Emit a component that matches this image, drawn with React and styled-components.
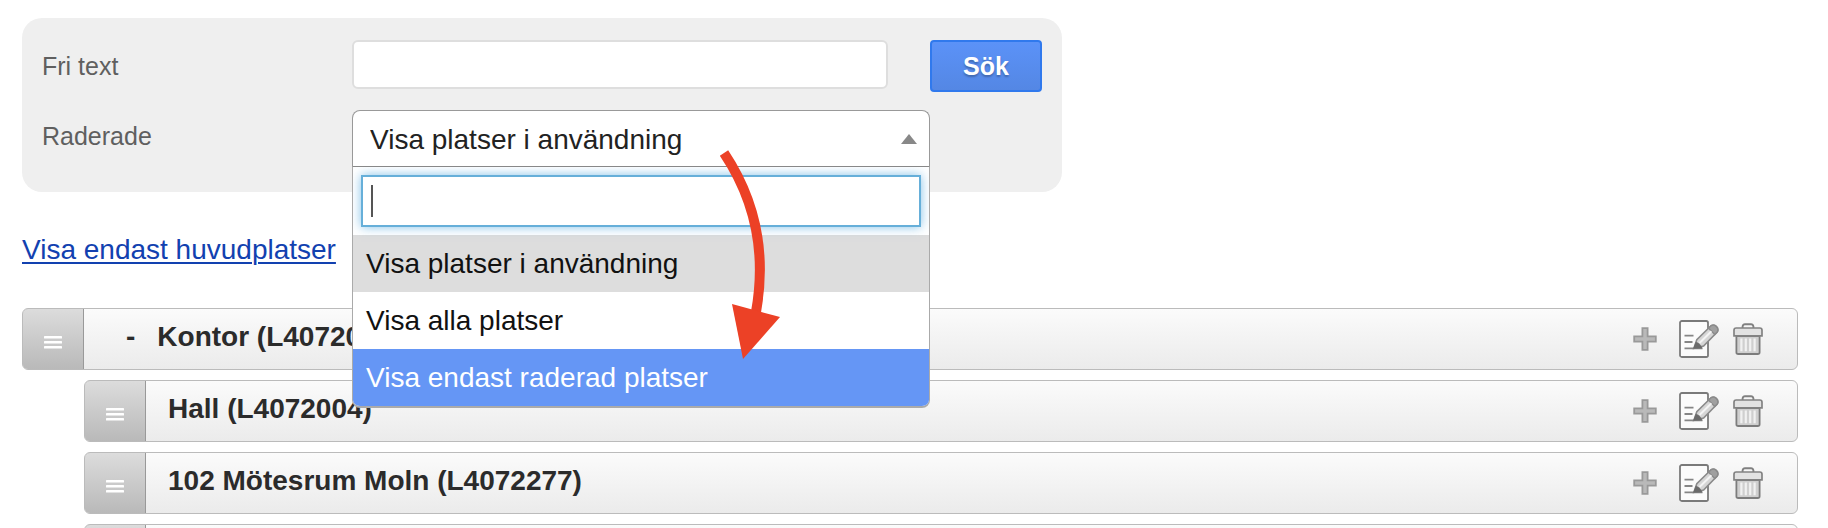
import React from "react";
import styled, { createGlobalStyle } from "styled-components";

const GlobalStyle = createGlobalStyle`
  * {
    box-sizing: border-box;
  }
  body {
    margin: 0;
    background-color: #fff;
    font-family: "Liberation Sans", Arial, Helvetica, sans-serif;
  }
`;

const Page = styled.div`
  height: 100vh;
  overflow: hidden;
  padding: 18px 30px 0 22px;
`;

const SearchPanel = styled.form`
  display: grid;
  grid-template-columns: 310px minmax(0, 1fr) 112px;
  row-gap: 18px;
  align-items: start;
  max-width: 1040px;
  padding: 22px 20px 26px;
  border-radius: 20px;
  background-color: #efefef;
`;

const Label = styled.label`
  font-size: 25px;
  line-height: 52px;
  color: #5f5f5f;
`;

const TextField = styled.div`
  padding-right: 42px;
`;

const TextInput = styled.input`
  display: block;
  width: 100%;
  height: 49px;
  padding: 0 12px;
  border: 2px solid #dedede;
  border-radius: 6px;
  background-color: #fff;
  font: inherit;
  font-size: 25px;
  outline: none;
`;

const SearchButton = styled.button`
  height: 52px;
  padding: 0;
  border: 2px solid #3079ed;
  border-radius: 4px;
  background-image: linear-gradient(#5b92f8, #5487e4);
  color: #fff;
  font: inherit;
  font-size: 25px;
  font-weight: bold;
  text-shadow: 0 2px 2px rgba(0, 0, 0, 0.25);
`;

const Dropdown = styled.div`
  position: relative;
  height: 56px;
`;

const Select = styled.select`
  display: block;
  appearance: none;
  width: 100%;
  height: 100%;
  padding: 2px 48px 0 17px;
  border: 1px solid #999;
  border-bottom: none;
  border-radius: 8px 8px 0 0;
  background-color: #fff;
  color: #222;
  font: inherit;
  font-size: 28px;
  outline: none;
`;

const Caret = styled.span`
  position: absolute;
  top: 24px;
  right: 13px;
  border: 8px solid transparent;
  border-top: none;
  border-bottom: 10px solid #888;
`;

const Menu = styled.div`
  position: absolute;
  z-index: 1;
  top: 100%;
  left: 0;
  right: 0;
  overflow: hidden;
  border: 1px solid #aaa;
  border-top-color: #888;
  border-bottom-width: 2px;
  border-radius: 0 0 8px 8px;
  background-color: #fff;
`;

const Filter = styled.div`
  position: relative;
  padding: 8px;
`;

const FilterInput = styled.input`
  display: block;
  width: 100%;
  height: 52px;
  padding: 0 10px;
  border: 2px solid #66afd9;
  background-color: #fff;
  box-shadow: 0 0 10px rgba(82, 168, 222, 0.7);
  font: inherit;
  font-size: 28px;
  outline: none;
  caret-color: transparent;
`;

const Cursor = styled.span`
  position: absolute;
  top: 18px;
  left: 18px;
  width: 2px;
  height: 32px;
  background-color: #555;
`;

const Options = styled.ul`
  margin: 0;
  padding: 0;
  list-style: none;
`;

const backgrounds = { selected: "#ddd", active: "#6596f5" };

const Option = styled.li`
  padding: 0 13px;
  background-color: ${(props) => backgrounds[props.$state] || "#fff"};
  color: ${(props) => (props.$state === "active" ? "#fff" : "#111")};
  font-size: 28px;
  line-height: 57px;
`;

const Arrow = styled.svg`
  position: absolute;
  z-index: 2;
  top: 30px;
  left: 358px;
  width: 80px;
  height: 230px;
  pointer-events: none;
`;

const FilterLink = styled.a`
  display: inline-block;
  margin: 42px 0;
  color: #1241b0;
  font-size: 28px;
  line-height: 32px;
  text-decoration-thickness: 2px;
  text-underline-offset: 3px;
`;

const PlaceList = styled.ul`
  display: flex;
  flex-direction: column;
  gap: 10px;
  margin: 0;
  padding: 0;
  list-style: none;
`;

const Place = styled.li`
  display: flex;
  flex: none;
  height: 62px;
  margin-left: ${(props) => (props.$nested ? 62 : 0)}px;
  overflow: hidden;
  border: 1px solid #bbb;
  border-radius: 6px;
  background-image: linear-gradient(#fbfbfb, #ebebeb);
`;

const Handle = styled.button`
  display: flex;
  align-items: center;
  justify-content: center;
  width: 62px;
  margin: -1px 0 -1px -1px;
  padding: 6px 0 0;
  border: 1px solid #999;
  border-radius: 6px 0 0 6px;
  background-image: linear-gradient(#dcdcdc, #b9b9b9);
`;

const Toggle = styled.button`
  padding: 0 0 0 42px;
  border: none;
  background: none;
  color: #2b2b2b;
  font: inherit;
  font-size: 28px;
  font-weight: bold;
  line-height: 56px;
  align-self: flex-start;
`;

const Name = styled.span`
  flex: 1;
  padding-left: 22px;
  color: #2b2b2b;
  font-size: 28px;
  font-weight: bold;
  line-height: 56px;
`;

const Actions = styled.div`
  display: flex;
  align-items: center;
  padding-right: 34px;
`;

const Action = styled.button`
  display: flex;
  padding: 0;
  margin-left: ${(props) => props.$gap || 0}px;
  border: none;
  background: none;
`;

const options = [
  { label: "Visa platser i användning", state: "selected" },
  { label: "Visa alla platser" },
  { label: "Visa endast raderad platser", state: "active" },
];

const places = [
  { name: "Kontor (L4072003)", open: true },
  { name: "Hall (L4072004)", nested: true },
  { name: "102 Mötesrum Moln (L4072277)", nested: true },
  { name: "", nested: true },
];

function GripIcon() {
  return (
    <svg width="18" height="13" viewBox="0 0 18 13" fill="#fff">
      <rect y="0" width="18" height="2.6" rx="0.6" />
      <rect y="5" width="18" height="2.6" rx="0.6" />
      <rect y="10" width="18" height="2.6" rx="0.6" />
    </svg>
  );
}

function PlusIcon() {
  return (
    <svg width="24" height="24" viewBox="0 0 24 24">
      <path
        d="M9.4 1.2h5.2v8.2h8.2v5.2h-8.2v8.2H9.4v-8.2H1.2V9.4h8.2z"
        fill="#b9b9b9"
        stroke="#999"
        strokeWidth="1.8"
      />
    </svg>
  );
}

function EditIcon() {
  return (
    <svg width="40" height="38" viewBox="0 0 40 38">
      <rect x="1" y="1" width="28" height="36" rx="1.8" fill="#fbfbfb" stroke="#7a7a7a" strokeWidth="1.8" />
      <path d="M5.5 15.7h9M5.5 22h8M5.5 28.3h18" stroke="#858585" strokeWidth="1.8" />
      <path
        d="M14.8 28.4l3-8.6L32 5.8q2.6-1.6 5.2.6t1.2 5.4L24.6 26z"
        fill="#d6d6d6"
        stroke="#8a8a8a"
        strokeWidth="1.6"
      />
      <path d="M29.6 8.2L32 5.8q2.6-1.6 5.2.6t1.2 5.4l-2.6 2.6z" fill="#a0a0a0" stroke="#8a8a8a" strokeWidth="1.4" />
      <path d="M20.5 23L32.4 11.2" stroke="#f4f4f4" strokeWidth="2" />
      <path d="M14 28.8l2.8-6.8q4 .6 6.6 6.2z" fill="#6a6a6a" />
    </svg>
  );
}

function TrashIcon() {
  return (
    <svg width="30" height="32" viewBox="0 0 30 32">
      <path d="M9.6 5V3.4Q10 1.2 12 1.2h6q2 0 2.4 2.2V5" fill="none" stroke="#808080" strokeWidth="1.9" />
      <path d="M3.4 13h23.2v16.2q0 1.8-1.8 1.8H5.2q-1.8 0-1.8-1.8z" fill="#cfcfcf" stroke="#7c7c7c" strokeWidth="1.8" />
      <path d="M8.4 15.6v12.6M12.8 15.6v12.6M17.2 15.6v12.6M21.6 15.6v12.6" stroke="#f1f1f1" strokeWidth="2.2" />
      <path d="M1 12.8V7.2Q1 5 3.2 5h23.6Q29 5 29 7.2v5.6z" fill="#e2e2e2" stroke="#828282" strokeWidth="1.7" />
    </svg>
  );
}

export default function App() {
  return (
    <Page>
      <GlobalStyle />
      <SearchPanel onSubmit={(e) => e.preventDefault()}>
        <Label htmlFor="text">Fri text</Label>
        <TextField>
          <TextInput id="text" type="text" />
        </TextField>
        <SearchButton type="submit">Sök</SearchButton>
        <Label htmlFor="deleted">Raderade</Label>
        <Dropdown>
          <Select id="deleted">
            {options.map((option) => (
              <option key={option.label}>{option.label}</option>
            ))}
          </Select>
          <Caret />
          <Menu>
            <Filter>
              <FilterInput type="text" aria-label="Raderade" />
              <Cursor />
            </Filter>
            <Options role="listbox" aria-label="Raderade">
              {options.map((option) => (
                <Option
                  key={option.label}
                  role="option"
                  aria-selected={option.state === "selected"}
                  $state={option.state}
                >
                  {option.label}
                </Option>
              ))}
            </Options>
          </Menu>
          <Arrow viewBox="710 140 80 230">
            <path d="M724 153C750 192 768 245 756 312" fill="none" stroke="#ec4126" strokeWidth="10" />
            <path d="M732 304l48 13-37 42z" fill="#ec4126" />
          </Arrow>
        </Dropdown>
      </SearchPanel>
      <FilterLink href="#">Visa endast huvudplatser</FilterLink>
      <PlaceList>
        {places.map((place, index) => (
          <Place key={index} $nested={place.nested}>
            <Handle type="button" aria-label="Flytta">
              <GripIcon />
            </Handle>
            {place.open && <Toggle type="button">-</Toggle>}
            <Name>{place.name}</Name>
            <Actions>
              <Action type="button" aria-label="Lägg till">
                <PlusIcon />
              </Action>
              <Action type="button" aria-label="Redigera" $gap={22}>
                <EditIcon />
              </Action>
              <Action type="button" aria-label="Ta bort" $gap={14}>
                <TrashIcon />
              </Action>
            </Actions>
          </Place>
        ))}
      </PlaceList>
    </Page>
  );
}
